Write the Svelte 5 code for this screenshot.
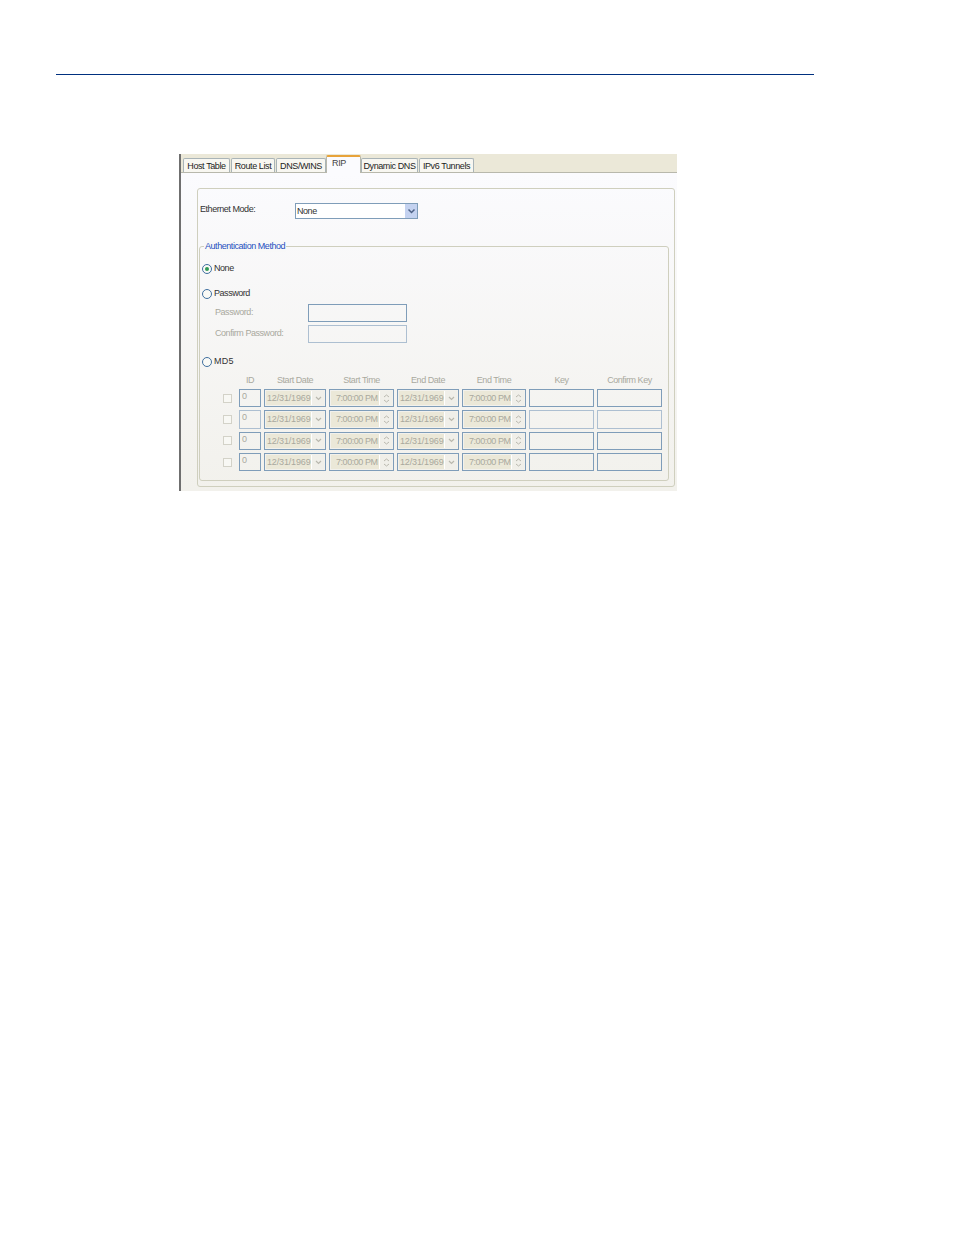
<script>
  const tabs = [
    { label: 'Host Table', width: 47 },
    { label: 'Route List', width: 44 },
    { label: 'DNS/WINS', width: 50 },
    { label: 'RIP', width: 35, active: true },
    { label: 'Dynamic DNS', width: 57 },
    { label: 'IPv6 Tunnels', width: 55 }
  ]
  const headers = ['ID', 'Start Date', 'Start Time', 'End Date', 'End Time', 'Key', 'Confirm Key']
  const rows = [0, 1, 2, 3]
</script>

<div class="page">
  <div class="rule"></div>

  <div class="shot">
    <div class="tabs">
      {#each tabs as tab}
        <div class="tab" class:active={tab.active} style="width: {tab.width}px">{tab.label}</div>
      {/each}
    </div>

    <div class="panel">
      <div class="outer">
        <div class="mode-row">
          <span class="mode-label">Ethernet Mode:</span>
          <div class="select">
            <span>None</span>
            <span class="select-btn">
              <svg width="9" height="7" viewBox="0 0 9 7"><path d="M1.5 1.5 L4.5 4.5 L7.5 1.5" fill="none" stroke="#4d6185" stroke-width="1.5" /></svg>
            </span>
          </div>
        </div>

        <div class="auth">
          <div class="legend">Authentication Method</div>

          <div class="radio-row first">
            <span class="radio on"><span class="dot"></span></span>
            <span class="radio-text">None</span>
          </div>

          <div class="radio-row second">
            <span class="radio"></span>
            <span class="radio-text">Password</span>
          </div>

          <div class="pw-row first-pw">
            <span class="pw-label">Password:</span>
            <div class="field pw-input"></div>
          </div>
          <div class="pw-row">
            <span class="pw-label">Confirm Password:</span>
            <div class="field pw-input light"></div>
          </div>

          <div class="radio-row third">
            <span class="radio"></span>
            <span class="radio-text md5">MD5</span>
          </div>

          <div class="grid">
            <span></span>
            {#each headers as h}
              <span class="head">{h}</span>
            {/each}

            {#each rows as r}
              <span class="check-cell"><span class="check"></span></span>
              <div class="field id" class:light={r === 1}>0</div>
              <div class="field combo">
                <span class="value date">12/31/1969</span>
                <span class="combo-btn">
                  <svg width="7" height="5" viewBox="0 0 7 5"><path d="M1 1 L3.5 3.5 L6 1" fill="none" stroke="#b9b8ae" stroke-width="1.2" /></svg>
                </span>
              </div>
              <div class="field combo">
                <span class="value time">7:00:00 PM</span>
                <span class="spin">
                  <svg width="7" height="4" viewBox="0 0 7 4"><path d="M1 3 L3.5 1 L6 3" fill="none" stroke="#b9b8ae" /></svg>
                  <svg width="7" height="4" viewBox="0 0 7 4"><path d="M1 1 L3.5 3 L6 1" fill="none" stroke="#b9b8ae" /></svg>
                </span>
              </div>
              <div class="field combo">
                <span class="value date">12/31/1969</span>
                <span class="combo-btn">
                  <svg width="7" height="5" viewBox="0 0 7 5"><path d="M1 1 L3.5 3.5 L6 1" fill="none" stroke="#b9b8ae" stroke-width="1.2" /></svg>
                </span>
              </div>
              <div class="field combo">
                <span class="value time">7:00:00 PM</span>
                <span class="spin">
                  <svg width="7" height="4" viewBox="0 0 7 4"><path d="M1 3 L3.5 1 L6 3" fill="none" stroke="#b9b8ae" /></svg>
                  <svg width="7" height="4" viewBox="0 0 7 4"><path d="M1 1 L3.5 3 L6 1" fill="none" stroke="#b9b8ae" /></svg>
                </span>
              </div>
              <div class="field" class:light={r === 1}></div>
              <div class="field" class:light={r === 1}></div>
            {/each}
          </div>
        </div>
      </div>
    </div>
  </div>
</div>

<style>
  :global(body) {
    background: #fff;
  }

  .page {
    width: 954px;
    height: 1235px;
    padding-top: 74px;
    box-sizing: border-box;
    font-family: "Liberation Sans", Arial, sans-serif;
    font-size: 9px;
    letter-spacing: -0.45px;
    color: #333;
    overflow: hidden;
  }

  .rule {
    width: 758px;
    height: 1px;
    margin-left: 56px;
    background: #00307f;
  }

  .shot {
    width: 496px;
    height: 337px;
    margin: 79px 0 0 179px;
    border-left: 2px solid #6f6f6f;
    display: flex;
    flex-direction: column;
  }

  .tabs {
    height: 18px;
    flex: none;
    display: flex;
    align-items: flex-end;
    padding-left: 2px;
    gap: 1px;
    background: #ebe8d8;
    border-bottom: 1px solid #b8b8ac;
  }

  .tab {
    height: 14px;
    box-sizing: border-box;
    border: 1px solid #a9b4b8;
    border-bottom: none;
    border-radius: 2px 2px 0 0;
    background: #f8f7f1;
    text-align: center;
    line-height: 14px;
    white-space: nowrap;
    color: #1c1c1c;
    letter-spacing: -0.4px;
  }

  .tab.active {
    height: 18px;
    margin-bottom: -1px;
    margin-left: -1px;
    margin-right: -1px;
    padding-right: 9px;
    line-height: 13px;
    background: #fbfbfe;
    border-color: #b8b8ac;
    border-top: 2px solid #e8a33a;
    color: #444;
  }

  .panel {
    flex: 1;
    padding: 15px 2px 4px 16px;
    background: linear-gradient(#fbfbfe, #f2f1ec);
    display: flex;
  }

  .outer {
    flex: 1;
    border: 1px solid #cfcfbe;
    border-radius: 3px;
    padding: 14px 5px 5px 1px;
    display: flex;
    flex-direction: column;
  }

  .mode-row {
    display: flex;
    align-items: center;
    height: 16px;
  }

  .mode-label {
    width: 95px;
    padding-left: 1px;
    margin-top: -4px;
  }

  .select {
    width: 123px;
    height: 16px;
    box-sizing: border-box;
    border: 1px solid #7f9db9;
    background: #fff;
    display: flex;
    align-items: center;
    justify-content: space-between;
    padding-left: 1px;
  }

  .select-btn {
    width: 12px;
    height: 14px;
    background: #c4d2f0;
    display: flex;
    align-items: center;
    justify-content: center;
  }

  .auth {
    position: relative;
    margin-top: 27px;
    flex: 1;
    border: 1px solid #cfcfbe;
    border-radius: 3px;
    padding-left: 2px;
  }

  .legend {
    position: absolute;
    top: -6px;
    left: 4px;
    padding: 0 1px;
    background: #f8f8f8;
    color: #1f4fc0;
    line-height: 11px;
  }

  .radio-row {
    display: flex;
    align-items: center;
    gap: 2px;
    height: 12px;
  }

  .radio-row.first {
    margin-top: 16px;
  }

  .radio-row.second {
    margin-top: 13px;
  }

  .radio-row.third {
    margin-top: 13px;
  }

  .radio-text {
    margin-top: -2px;
  }

  .radio-text.md5 {
    letter-spacing: 0.3px;
  }

  .radio {
    width: 10px;
    height: 10px;
    box-sizing: border-box;
    border: 1px solid #3f6f9f;
    border-radius: 50%;
    background: #fafaf6;
    display: flex;
    align-items: center;
    justify-content: center;
  }

  .dot {
    width: 4px;
    height: 4px;
    border-radius: 50%;
    background: #2f9a55;
  }

  .pw-row {
    display: flex;
    align-items: flex-start;
    margin-top: 3px;
    padding-left: 13px;
    color: #a9a99e;
  }

  .pw-row.first-pw {
    margin-top: 4px;
  }

  .pw-label {
    width: 93px;
    line-height: 16px;
  }

  .field {
    box-sizing: border-box;
    height: 100%;
    border: 1px solid #7f9db9;
    color: #a9a99e;
  }

  .field.light {
    border-color: #adbfd1;
  }

  .pw-input {
    width: 99px;
    height: 18px;
  }

  .grid {
    display: grid;
    grid-template-columns: 13px 22px 62px 65px 62px 64px 65px 65px;
    grid-template-rows: 11px repeat(4, 18.3px);
    column-gap: 3px;
    row-gap: 3px;
    margin: 7px 0 0 21px;
  }

  .head {
    text-align: center;
    color: #a9a99e;
    white-space: nowrap;
    line-height: 10px;
  }

  .check-cell {
    display: flex;
    align-items: center;
  }

  .check {
    width: 9px;
    height: 9px;
    border: 1px solid #d3d2c8;
    background: #f8f8f4;
    box-sizing: border-box;
  }

  .id {
    padding-left: 2px;
    line-height: 13px;
  }

  .combo {
    display: flex;
    align-items: stretch;
    padding: 1px;
    background: #f2f1ec;
  }

  .value {
    flex: 1;
    min-width: 0;
    background: #ebe8d8;
    padding-left: 1px;
    line-height: 14px;
    white-space: nowrap;
  }

  .value.date {
    letter-spacing: -0.15px;
  }

  .value.time {
    padding-left: 5px;
  }

  .combo-btn,
  .spin {
    width: 12px;
    flex: none;
    background: #f0efe9;
    border-left: 1px solid #fff;
    display: flex;
    align-items: center;
    justify-content: center;
  }

  .spin {
    flex-direction: column;
    gap: 1px;
  }
</style>
